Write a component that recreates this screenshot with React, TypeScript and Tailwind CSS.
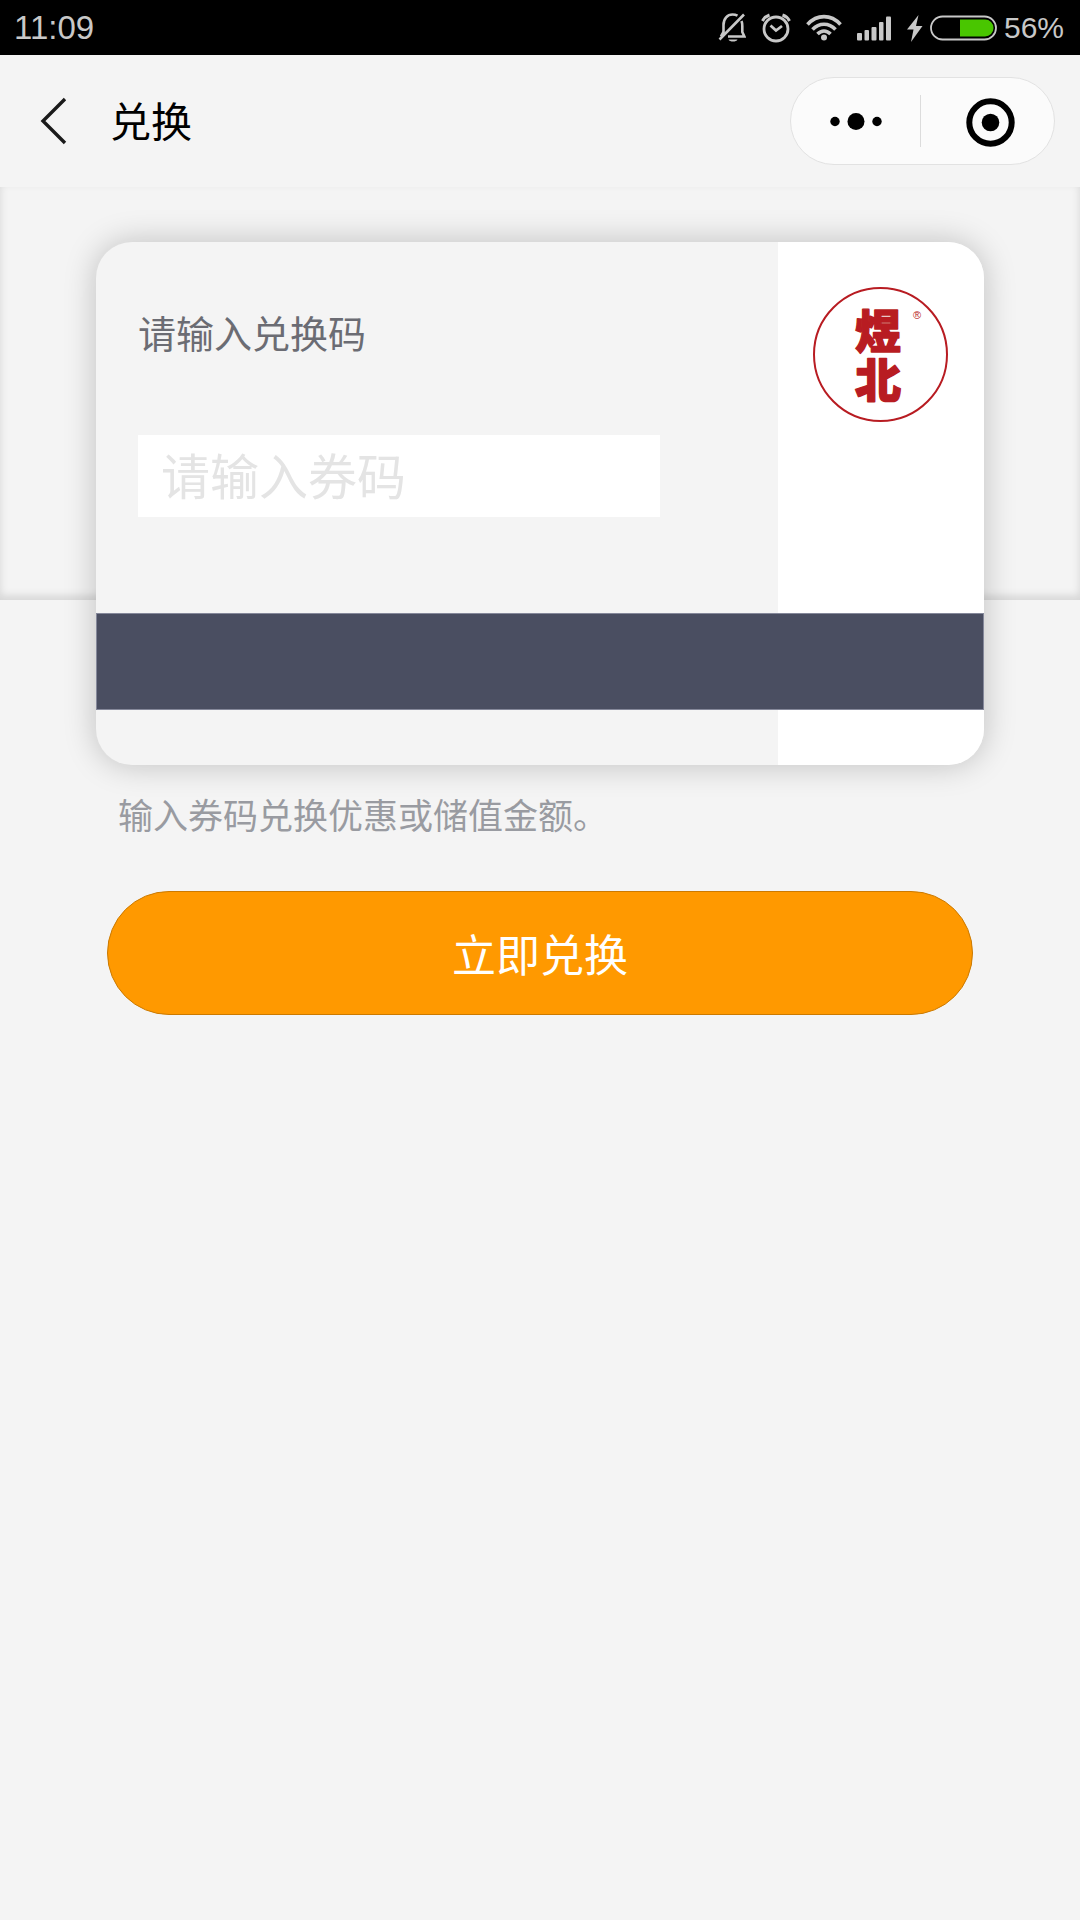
import { useState } from 'react'

function BellOffIcon() {
  return (
    <svg className="h-8 w-7" viewBox="0 0 28 32" fill="none" stroke="currentColor" strokeWidth={2.6} aria-hidden="true">
      <path d="M5.5 21V13C5.500 6.500 9.500 2.500 14.500 2.500c2 0 3.500.4 5 1.200M23.500 9c.6 1.500.8 3 .8 5v6l2 4.500H10" />
      <path d="M5.500 20l-2.500 4.500M26 2.500L1.500 27.500" />
      <path d="M10.500 27.500h9c-1 2.800-8 2.800-9 0z" fill="currentColor" stroke="none" />
    </svg>
  )
}

function AlarmIcon() {
  return (
    <svg className="h-8 w-[30px]" viewBox="0 0 30 32" fill="none" stroke="currentColor" strokeWidth={2.8} aria-hidden="true">
      <circle cx="15" cy="17" r="12" />
      <path d="M1.500 9C3 6 5.500 4 8.500 3M28.500 9C27 6 24.500 4 21.500 3" strokeWidth={3} />
      <path d="M9.500 13.500l5.500 5 6-4.500" strokeWidth={2.8} />
    </svg>
  )
}

function WifiIcon() {
  return (
    <svg className="h-8 w-9" viewBox="0 0 36 32" fill="none" stroke="currentColor" strokeWidth={3.6} aria-hidden="true">
      <path d="M1.500 12.500C11 2 25 2 34.500 12.500" />
      <path d="M6.500 17.500c6.500-7 16.500-7 23 0" />
      <path d="M11.500 22c4-4 9-4 13 0" />
      <circle cx="18" cy="25.500" r="3" fill="currentColor" stroke="none" />
    </svg>
  )
}

function SignalIcon() {
  return (
    <svg className="h-8 w-[35px]" viewBox="0 0 35 32" fill="currentColor" aria-hidden="true">
      <rect x="0" y="21" width="5" height="7.500" rx="1" />
      <rect x="7.500" y="18" width="4.500" height="10.500" rx="1" />
      <rect x="14.500" y="15" width="5" height="13.500" rx="1" />
      <rect x="22" y="10" width="4.500" height="18.500" rx="1" />
      <rect x="29" y="4.500" width="5" height="24" rx="1" />
    </svg>
  )
}

function BoltIcon() {
  return (
    <svg className="h-8 w-4" viewBox="0 0 16 32" fill="currentColor" aria-hidden="true">
      <path d="M11.500 3L0 17.500h6.500L4 30 15.500 14H9z" />
    </svg>
  )
}

function BatteryIcon() {
  return (
    <svg className="h-8 w-[67px]" viewBox="0 0 67 32" aria-hidden="true">
      <rect x="1" y="4.500" width="65" height="23" rx="11.500" fill="none" stroke="currentColor" strokeWidth={1.8} />
      <path d="M30 7.500h25a8.500 8.500 0 010 17H30z" fill="#49c600" />
    </svg>
  )
}

function StatusBar() {
  return (
    <div className="flex h-[55px] items-center justify-between bg-black pr-4 pl-[14px] text-[#c8c8c8]">
      <span className="text-[33px] leading-9">11:09</span>
      <div className="flex items-center gap-[15px]">
        <BellOffIcon />
        <AlarmIcon />
        <WifiIcon />
        <SignalIcon />
        <div className="flex items-center gap-[7px]">
          <BoltIcon />
          <BatteryIcon />
          <span className="text-[30px] leading-9">56%</span>
        </div>
      </div>
    </div>
  )
}

function Header() {
  return (
    <header className="flex h-[132px] items-center justify-between pr-[25px] pl-10">
      <div className="flex items-center gap-[42px]">
        <button type="button" aria-label="返回">
          <svg className="h-12 w-7" viewBox="0 0 28 48" fill="none" stroke="#1a1a1a" strokeWidth={3.4} aria-hidden="true">
            <path d="M25 2L3 24l22 22" />
          </svg>
        </button>
        <h1 className="pt-1 text-[41px] leading-[48px] text-black">兑换</h1>
      </div>
      <div className="flex h-[88px] w-[265px] items-center rounded-full border border-[#e2e2e2] bg-[#fbfbfb]">
        <button type="button" aria-label="更多" className="flex h-full flex-1 items-center justify-center">
          <svg className="h-[52px] w-[52px]" viewBox="0 0 52 52" aria-hidden="true">
            <circle cx="5" cy="26.500" r="4.700" />
            <circle cx="26" cy="26.500" r="8.500" />
            <circle cx="47" cy="26.500" r="4.700" />
          </svg>
        </button>
        <div className="h-[52px] w-px bg-[#dcdcdc]" />
        <button type="button" aria-label="关闭" className="flex h-full flex-1 items-center justify-center pl-1">
          <svg className="h-[52px] w-[52px]" viewBox="0 0 52 52" aria-hidden="true">
            <circle cx="26.500" cy="27.500" r="21.200" fill="none" stroke="black" strokeWidth={6} />
            <circle cx="26.500" cy="27.500" r="8.800" />
          </svg>
        </button>
      </div>
    </header>
  )
}

function BrandLogo() {
  return (
    <svg className="size-[136px]" viewBox="0 0 136 136" role="img" aria-label="煜北">
      <circle cx="67.500" cy="67.500" r="66.500" fill="none" stroke="#b81c22" strokeWidth={2} />
      <g fill="#b81c22" textAnchor="middle">
        <text
          y="61"
          fontSize="46"
          fontWeight="900"
          stroke="#b81c22"
          strokeWidth={1.4}
          strokeLinejoin="round"
        >
          <tspan x="65">煜</tspan>
          <tspan x="65" dy="49">北</tspan>
        </text>
        <text x="104" y="32" fontSize="11">®</text>
      </g>
    </svg>
  )
}

function RedeemCard({ code, onChange }: { code: string; onChange: (value: string) => void }) {
  return (
    <section className="col-start-1 row-start-1 mx-24 mt-[55px] overflow-hidden rounded-[36px] bg-[#f4f4f4] shadow-[0_0_32px_rgba(0,0,0,0.22)]">
      <div className="flex">
        <div className="flex flex-1 flex-col gap-[76px] pt-[69px] pr-[118px] pb-[96px] pl-[42px]">
          <label htmlFor="code" className="text-[38px] leading-[48px] text-[#6b6c73]">
            请输入兑换码
          </label>
          <input
            id="code"
            type="text"
            value={code}
            onChange={(e) => onChange(e.target.value)}
            placeholder="请输入券码"
            className="h-[82px] w-full bg-white px-[23px] pt-1 text-[49px] text-[#333333] outline-none placeholder:text-[#e4e4e4]"
          />
        </div>
        <div className="flex w-[206px] justify-center bg-white pt-[45px]">
          <BrandLogo />
        </div>
      </div>
      <div className="h-[97px] border border-[#85889a] bg-[#4a4e61]" />
      <div className="flex h-[55px] justify-end">
        <div className="w-[206px] bg-white" />
      </div>
    </section>
  )
}

export default function App() {
  const [code, setCode] = useState('')

  return (
    <div className="min-h-screen bg-[#f4f4f4] font-['Liberation_Sans','Noto_Sans_CJK_SC',sans-serif]">
      <StatusBar />
      <Header />
      <main>
        <div className="grid">
          <div className="col-start-1 row-start-1 h-[413px] bg-[#f4f4f4] shadow-[inset_0_-4px_8px_rgba(0,0,0,0.13)]" />
          <RedeemCard code={code} onChange={setCode} />
        </div>
        <p className="mt-7 px-[118px] text-[35px] leading-[48px] text-[#999ba1]">
          输入券码兑换优惠或储值金额。
        </p>
        <div className="mt-[50px] px-[107px]">
          <button
            type="button"
            className="h-[124px] w-full rounded-full border border-[#cc7a00] bg-[#ff9900] pt-2 text-[44px] text-white"
          >
            立即兑换
          </button>
        </div>
      </main>
    </div>
  )
}
